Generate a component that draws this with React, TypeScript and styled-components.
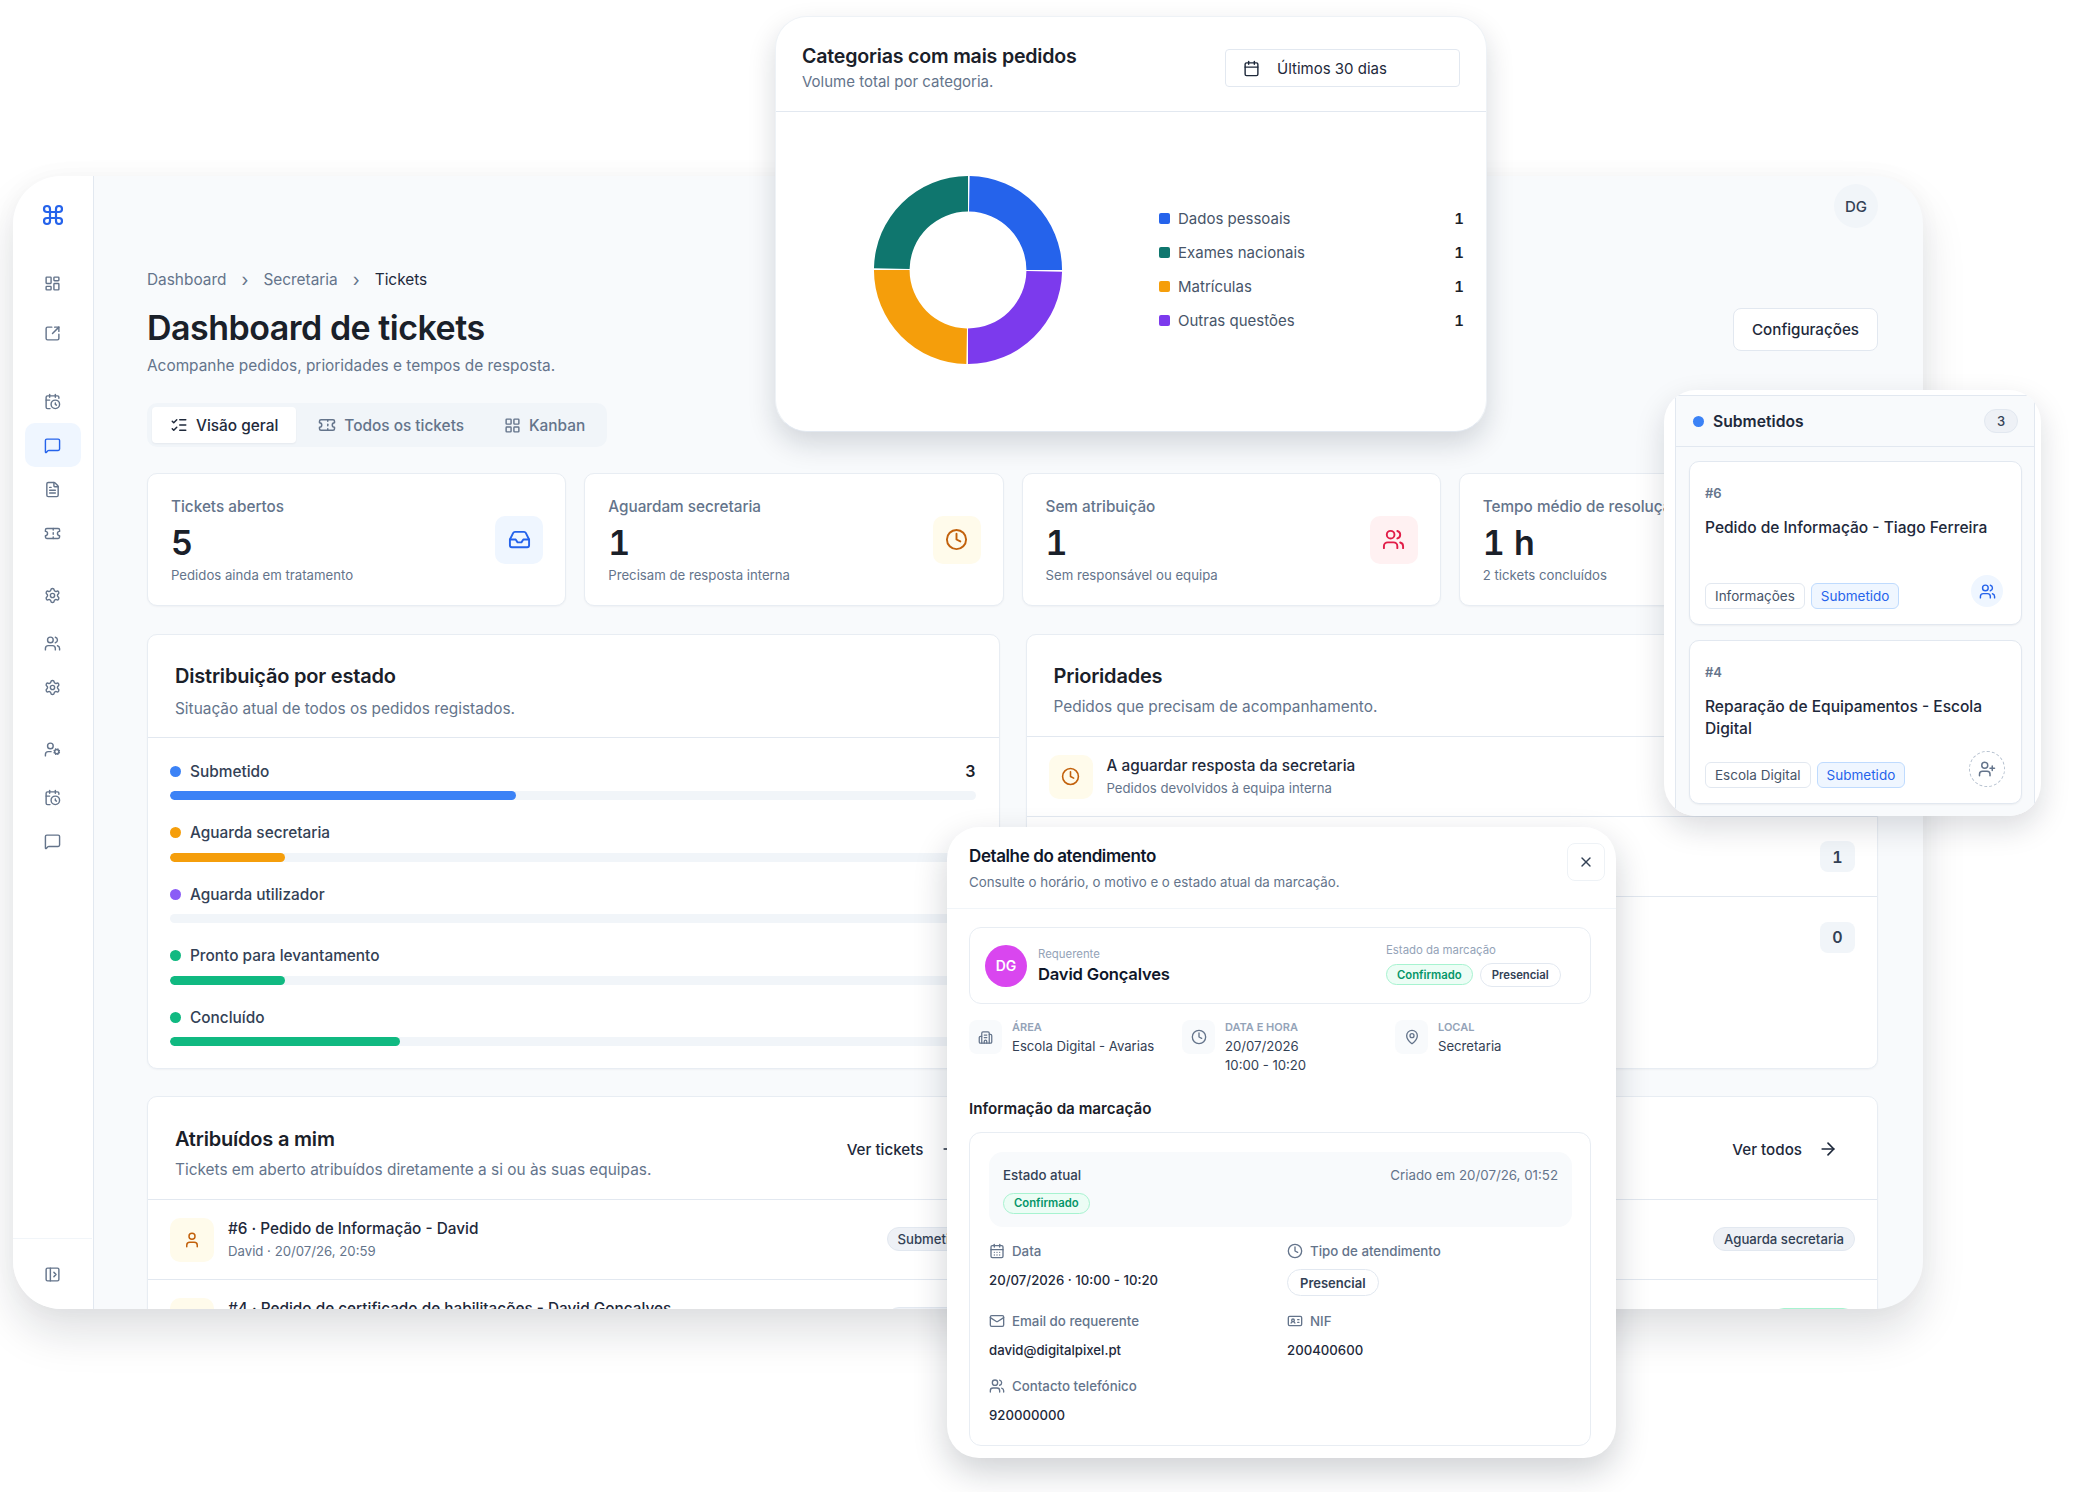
import React from 'react';
import styled, { createGlobalStyle } from 'styled-components';
import {
  ArrowRight, Building2, Calendar, CalendarClock, CalendarDays, Clock, Command, FileText, IdCard,
  Inbox, LayoutGrid, LayoutDashboard, ListChecks, Mail, MapPin, MessageSquare, PanelLeftOpen, Settings,
  SquareArrowOutUpRight, Ticket, Timer, User, UserCog, UserPlus, Users, X,
} from 'lucide-react';

const GlobalStyle = createGlobalStyle`
  html, body { margin: 0; padding: 0; background: #ffffff; }
  * { box-sizing: border-box; }
  body { font-family: 'Inter', 'Liberation Sans', sans-serif; color: #1a2029; }
`;

const stats = [
  { label: 'Submetido', color: '#3b82f6', value: '3', share: 42.9 },
  { label: 'Aguarda secretaria', color: '#f59e0b', value: '', share: 14.3 },
  { label: 'Aguarda utilizador', color: '#8b5cf6', value: '', share: 0 },
  { label: 'Pronto para levantamento', color: '#10b981', value: '', share: 14.3 },
  { label: 'Concluído', color: '#10b981', value: '', share: 28.6 },
];

const kpis = [
  { label: 'Tickets abertos', value: '5', sub: 'Pedidos ainda em tratamento', icon: Inbox, bg: '#eff6ff', fg: '#2563eb' },
  { label: 'Aguardam secretaria', value: '1', sub: 'Precisam de resposta interna', icon: Clock, bg: '#fffbeb', fg: '#c2610c' },
  { label: 'Sem atribuição', value: '1', sub: 'Sem responsável ou equipa', icon: Users, bg: '#fff1f2', fg: '#e11d48' },
  { label: 'Tempo médio de resolução', value: '1 h', sub: '2 tickets concluídos', icon: Timer, bg: '#ecfdf5', fg: '#059669' },
];

const legend = [
  { label: 'Dados pessoais', color: '#2563eb' },
  { label: 'Exames nacionais', color: '#0f766e' },
  { label: 'Matrículas', color: '#f59e0b' },
  { label: 'Outras questões', color: '#7c3aed' },
];

// fatia do donut, angulos em graus a partir do topo
const slice = (from: number, to: number) => {
  const pt = (r: number, a: number) => {
    const rad = ((a - 90) * Math.PI) / 180;
    return `${(100 + r * Math.cos(rad)).toFixed(2)} ${(100 + r * Math.sin(rad)).toFixed(2)}`;
  };
  return `M${pt(95, from)} A95 95 0 0 1 ${pt(95, to)} L${pt(59, to)} A59 59 0 0 0 ${pt(59, from)} Z`;
};

const App: React.FC = () => {
  return (
    <Stage>
      <GlobalStyle />

      <MainWindow>
        <Sidebar>
          <Logo><Command size={24} strokeWidth={2.2} /></Logo>
          <NavGroup $top={7} $gap={6}>
            <NavItem><LayoutDashboard size={17} /></NavItem>
            <NavItem><SquareArrowOutUpRight size={17} /></NavItem>
          </NavGroup>
          <NavGroup $top={24}>
            <NavItem><CalendarClock size={17} /></NavItem>
            <NavItem $active><MessageSquare size={17} /></NavItem>
            <NavItem><FileText size={17} /></NavItem>
            <NavItem><Ticket size={17} /></NavItem>
          </NavGroup>
          <NavGroup $top={18} $gap={4}>
            <NavItem><Settings size={17} /></NavItem>
            <NavItem><Users size={17} /></NavItem>
          </NavGroup>
          <NavGroup>
            <NavItem><Settings size={17} /></NavItem>
          </NavGroup>
          <NavGroup $top={18} $gap={4}>
            <NavItem><UserCog size={17} /></NavItem>
            <NavItem><CalendarClock size={17} /></NavItem>
          </NavGroup>
          <NavGroup>
            <NavItem><MessageSquare size={17} /></NavItem>
          </NavGroup>
          <SideFoot><PanelLeftOpen size={17} /></SideFoot>
        </Sidebar>

        <Main>
          <Topbar><UserBubble>DG</UserBubble></Topbar>

          <Breadcrumb>
            <span>Dashboard</span><Sep>›</Sep><span>Secretaria</span><Sep>›</Sep><b>Tickets</b>
          </Breadcrumb>

          <PageHead>
            <div>
              <PageTitle>Dashboard de tickets</PageTitle>
              <PageSub>Acompanhe pedidos, prioridades e tempos de resposta.</PageSub>
            </div>
            <OutlineButton>Configurações</OutlineButton>
          </PageHead>

          <Tabs>
            <Tab $active><ListChecks size={18} />Visão geral</Tab>
            <Tab><Ticket size={18} />Todos os tickets</Tab>
            <Tab><LayoutGrid size={17} />Kanban</Tab>
          </Tabs>

          <KpiGrid>
            {kpis.map((k) => (
              <KpiCard key={k.label}>
                <KpiText>
                  <KpiLabel>{k.label}</KpiLabel>
                  <KpiValue>{k.value}</KpiValue>
                  <KpiSub>{k.sub}</KpiSub>
                </KpiText>
                <KpiTile $bg={k.bg} $fg={k.fg}><k.icon size={23} /></KpiTile>
              </KpiCard>
            ))}
          </KpiGrid>

          <TwoCols>
            <Panel>
              <PanelHead>
                <PanelTitle>Distribuição por estado</PanelTitle>
                <PanelSub $gap={10}>Situação atual de todos os pedidos registados.</PanelSub>
              </PanelHead>
              <StatList>
                {stats.map((s) => (
                  <div key={s.label}>
                    <StatRow>
                      <Dot $color={s.color} />
                      <StatLabel>{s.label}</StatLabel>
                      <StatValue>{s.value}</StatValue>
                    </StatRow>
                    <Track><Fill $color={s.color} style={{ width: `${s.share}%` }} /></Track>
                  </div>
                ))}
              </StatList>
            </Panel>

            <Panel>
              <PanelHead $bottom={19}>
                <PanelTitle>Prioridades</PanelTitle>
                <PanelSub $gap={8}>Pedidos que precisam de acompanhamento.</PanelSub>
              </PanelHead>
              <ListRow>
                <RowTile><Clock size={19} /></RowTile>
                <RowText>
                  <RowTitle>A aguardar resposta da secretaria</RowTitle>
                  <RowSub>Pedidos devolvidos à equipa interna</RowSub>
                </RowText>
                <CountBadge>1</CountBadge>
              </ListRow>
              <ListRow>
                <RowText />
                <CountBadge>1</CountBadge>
              </ListRow>
              <ListRow $plain>
                <RowText />
                <CountBadge>0</CountBadge>
              </ListRow>
            </Panel>
          </TwoCols>

          <BottomCols>
            <Panel>
              <PanelHeadRow>
                <div>
                  <PanelTitle>Atribuídos a mim</PanelTitle>
                  <PanelSub $gap={8}>Tickets em aberto atribuídos diretamente a si ou às suas equipas.</PanelSub>
                </div>
                <TextLink>Ver tickets<ArrowRight size={20} /></TextLink>
              </PanelHeadRow>
              <ListRow>
                <RowTile><User size={18} /></RowTile>
                <RowText>
                  <RowTitle>#6 · Pedido de Informação - David</RowTitle>
                  <RowSub>David · 20/07/26, 20:59</RowSub>
                </RowText>
                <StatePill>Submetido</StatePill>
              </ListRow>
              <ListRow>
                <RowTile><User size={18} /></RowTile>
                <RowText>
                  <RowTitle>#4 · Pedido de certificado de habilitações - David Gonçalves</RowTitle>
                  <RowSub />
                </RowText>
                <StatePill>Submetido</StatePill>
              </ListRow>
            </Panel>

            <Panel>
              <PanelHeadRow>
                <div />
                <TextLink>Ver todos<ArrowRight size={20} /></TextLink>
              </PanelHeadRow>
              <ListRow>
                <RowText />
                <StatePill>Aguarda secretaria</StatePill>
              </ListRow>
              <ListRow>
                <RowText />
                <GreenStub />
              </ListRow>
            </Panel>
          </BottomCols>
        </Main>
      </MainWindow>

      <ChartCard>
        <ChartHead>
          <div>
            <ChartTitle>Categorias com mais pedidos</ChartTitle>
            <ChartSub>Volume total por categoria.</ChartSub>
          </div>
          <RangeSelect><Calendar size={17} />Últimos 30 dias</RangeSelect>
        </ChartHead>
        <ChartBody>
          <Donut viewBox="0 0 200 200">
            <path d={slice(1, 90)} fill="#2563eb" />
            <path d={slice(91, 180)} fill="#7c3aed" />
            <path d={slice(181, 270)} fill="#f59e0b" />
            <path d={slice(271, 360)} fill="#0f766e" />
          </Donut>
          <Legend>
            {legend.map((l) => (
              <LegendRow key={l.label}>
                <Swatch $color={l.color} />
                <LegendLabel>{l.label}</LegendLabel>
                <LegendValue>1</LegendValue>
              </LegendRow>
            ))}
          </Legend>
        </ChartBody>
      </ChartCard>

      <KanbanShell>
        <KanbanColumn>
          <KanbanHead>
            <Dot $color="#3b82f6" />
            <KanbanTitle>Submetidos</KanbanTitle>
            <KanbanCount>3</KanbanCount>
          </KanbanHead>
          <KanbanCards>
            <TicketCard>
              <TicketId>#6</TicketId>
              <TicketTitle>Pedido de Informação - Tiago Ferreira</TicketTitle>
              <TicketFoot>
                <Tag>Informações</Tag>
                <Tag $blue>Submetido</Tag>
                <Assignee><Users size={17} /></Assignee>
              </TicketFoot>
            </TicketCard>
            <TicketCard>
              <TicketId>#4</TicketId>
              <TicketTitle>Reparação de Equipamentos - Escola Digital</TicketTitle>
              <TicketFoot>
                <Tag>Escola Digital</Tag>
                <Tag $blue>Submetido</Tag>
                <Assignee $empty><UserPlus size={18} /></Assignee>
              </TicketFoot>
            </TicketCard>
          </KanbanCards>
        </KanbanColumn>
      </KanbanShell>

      <DetailModal>
        <ModalHead>
          <div>
            <ModalTitle>Detalhe do atendimento</ModalTitle>
            <ModalSub>Consulte o horário, o motivo e o estado atual da marcação.</ModalSub>
          </div>
          <CloseButton><X size={16} /></CloseButton>
        </ModalHead>
        <ModalBody>
          <RequesterBox>
            <Avatar>DG</Avatar>
            <div>
              <TinyLabel>Requerente</TinyLabel>
              <RequesterName>David Gonçalves</RequesterName>
            </div>
            <RequesterState>
              <TinyLabel>Estado da marcação</TinyLabel>
              <PillRow>
                <Pill $tone="green">Confirmado</Pill>
                <Pill>Presencial</Pill>
              </PillRow>
            </RequesterState>
          </RequesterBox>

          <InfoRow>
            <InfoCell>
              <InfoTile><Building2 size={15} /></InfoTile>
              <div>
                <InfoLabel>Área</InfoLabel>
                <InfoValue>Escola Digital - Avarias</InfoValue>
              </div>
            </InfoCell>
            <InfoCell>
              <InfoTile><Clock size={16} /></InfoTile>
              <div>
                <InfoLabel>Data e hora</InfoLabel>
                <InfoValue>20/07/2026<br />10:00 - 10:20</InfoValue>
              </div>
            </InfoCell>
            <InfoCell>
              <InfoTile><MapPin size={16} /></InfoTile>
              <div>
                <InfoLabel>Local</InfoLabel>
                <InfoValue>Secretaria</InfoValue>
              </div>
            </InfoCell>
          </InfoRow>

          <SectionTitle>Informação da marcação</SectionTitle>

          <DetailBox>
            <StatusBox>
              <StatusLine>
                <StatusName>Estado atual</StatusName>
                <StatusDate>Criado em 20/07/26, 01:52</StatusDate>
              </StatusLine>
              <Pill $tone="green">Confirmado</Pill>
            </StatusBox>
            <FieldGrid>
              <Field>
                <FieldLabel><CalendarDays size={16} />Data</FieldLabel>
                <FieldValue>20/07/2026 · 10:00 - 10:20</FieldValue>
              </Field>
              <Field>
                <FieldLabel><Clock size={16} />Tipo de atendimento</FieldLabel>
                <WidePill>Presencial</WidePill>
              </Field>
              <Field>
                <FieldLabel><Mail size={16} />Email do requerente</FieldLabel>
                <FieldValue>david@digitalpixel.pt</FieldValue>
              </Field>
              <Field>
                <FieldLabel><IdCard size={16} />NIF</FieldLabel>
                <FieldValue>200400600</FieldValue>
              </Field>
              <Field>
                <FieldLabel><Users size={16} />Contacto telefónico</FieldLabel>
                <FieldValue>920000000</FieldValue>
              </Field>
            </FieldGrid>
          </DetailBox>
        </ModalBody>
      </DetailModal>
    </Stage>
  );
};
export default App;

const Stage = styled.div`
  position: relative;
  width: 2074px;
  height: 1492px;
  overflow: hidden;
  background: #ffffff;
`;

/* as quatro janelas flutuam livres sobre o palco */
const MainWindow = styled.div`
  position: absolute;
  left: 13px;
  top: 176px;
  width: 1910px;
  height: 1133px;
  display: flex;
  overflow: hidden;
  background: #f8fafc;
  border-radius: 48px;
  box-shadow: 0 24px 44px rgba(15, 23, 42, 0.13), 0 0 24px rgba(15, 23, 42, 0.03);
`;
const Sidebar = styled.aside`
  width: 81px;
  flex-shrink: 0;
  padding-right: 1px;
  display: flex;
  flex-direction: column;
  align-items: center;
  background: #ffffff;
  border-right: 1px solid #e2e8f0;
`;
const Logo = styled.div`
  height: 78px;
  display: flex;
  align-items: center;
  color: #2563eb;
`;
const NavGroup = styled.div<{ $top?: number; $gap?: number }>`
  margin-top: ${(p) => p.$top ?? 0}px;
  display: flex;
  flex-direction: column;
  gap: ${(p) => p.$gap ?? 0}px;
`;
const NavItem = styled.div<{ $active?: boolean }>`
  width: 56px;
  height: 44px;
  display: flex;
  align-items: center;
  justify-content: center;
  border-radius: 10px;
  color: ${(p) => (p.$active ? '#2563eb' : '#64748b')};
  background: ${(p) => (p.$active ? '#eff6ff' : 'transparent')};
`;
const SideFoot = styled.div`
  width: 100%;
  margin-top: auto;
  height: 71px;
  display: flex;
  align-items: center;
  justify-content: center;
  color: #64748b;
  border-top: 1px solid #f1f5f9;
`;
const Main = styled.main`
  flex: 1;
  min-width: 0;
  padding: 8px 45px 0 53px;
`;
const Topbar = styled.div`
  display: flex;
  justify-content: flex-end;
`;
const UserBubble = styled.div`
  width: 44px;
  height: 44px;
  display: flex;
  align-items: center;
  justify-content: center;
  border-radius: 50%;
  background: #f1f5f9;
  color: #334155;
  font-size: 15px;
  font-weight: 500;
`;
const Breadcrumb = styled.nav`
  margin-top: 41px;
  height: 20px;
  display: flex;
  align-items: center;
  font-size: 15.4px;
  color: #64748b;

  b {
    font-weight: 400;
    color: #1e293b;
  }
`;
const Sep = styled.span`
  width: 37px;
  text-align: center;
  font-size: 18px;
`;
const PageHead = styled.div`
  margin-top: 17px;
  display: flex;
  justify-content: space-between;
  align-items: flex-start;
`;
const PageTitle = styled.h1`
  margin: 0;
  font-size: 34px;
  line-height: 44px;
  font-weight: 600;
  letter-spacing: -0.5px;
  color: #1a2029;
`;
const PageSub = styled.p`
  margin: 5px 0 0;
  font-size: 15.4px;
  line-height: 22px;
  color: #64748b;
`;
const OutlineButton = styled.button`
  margin-top: 2px;
  width: 145px;
  height: 43px;
  border: 1px solid #e2e8f0;
  border-radius: 8px;
  background: #ffffff;
  font-family: inherit;
  font-size: 15.2px;
  font-weight: 500;
  color: #1e293b;
`;
const Tabs = styled.div`
  margin-top: 26px;
  width: 460px;
  height: 44px;
  padding: 4px 5px;
  display: flex;
  align-items: stretch;
  gap: 4px;
  border-radius: 10px;
  background: #f1f5f9;
`;
const Tab = styled.div<{ $active?: boolean }>`
  flex: none;
  display: flex;
  align-items: center;
  gap: 8px;
  padding: 0 18px;
  font-size: 15.4px;
  font-weight: 500;
  white-space: nowrap;
  border-radius: 4px;
  color: ${(p) => (p.$active ? '#1e293b' : '#64748b')};
  background: ${(p) => (p.$active ? '#ffffff' : 'transparent')};
  box-shadow: ${(p) => (p.$active ? '0 1px 2px rgba(15, 23, 42, 0.05)' : 'none')};
`;
const KpiGrid = styled.div`
  margin-top: 26px;
  display: grid;
  grid-template-columns: repeat(4, 1fr);
  gap: 18px;
`;
const KpiCard = styled.div`
  height: 133px;
  padding: 0 22px 0 23px;
  display: flex;
  align-items: center;
  justify-content: space-between;
  background: #ffffff;
  border: 1px solid #e8edf3;
  border-radius: 10px;
  box-shadow: 0 1px 2px rgba(15, 23, 42, 0.04);
`;
const KpiText = styled.div`
  padding-top: 1px;
`;
const KpiLabel = styled.div`
  font-size: 15.3px;
  line-height: 20px;
  font-weight: 500;
  white-space: nowrap;
  color: #64748b;
`;
const KpiValue = styled.div`
  margin-top: 7px;
  font-size: 34px;
  line-height: 38px;
  font-weight: 600;
  font-variant-numeric: tabular-nums;
  color: #1a2029;
`;
const KpiSub = styled.div`
  margin-top: 4px;
  font-size: 13.2px;
  line-height: 18px;
  color: #64748b;
`;
const KpiTile = styled.div<{ $bg: string; $fg: string }>`
  width: 48px;
  height: 48px;
  display: flex;
  align-items: center;
  justify-content: center;
  flex-shrink: 0;
  border-radius: 10px;
  background: ${(p) => p.$bg};
  color: ${(p) => p.$fg};
`;
const TwoCols = styled.div`
  margin-top: 28px;
  display: grid;
  grid-template-columns: 1fr 1fr;
  gap: 26px;
`;
const BottomCols = styled(TwoCols)`
  margin-top: 27px;
`;
const Panel = styled.section`
  background: #ffffff;
  border: 1px solid #e8edf3;
  border-radius: 10px;
  box-shadow: 0 1px 2px rgba(15, 23, 42, 0.04);
  min-width: 0;
`;
const PanelHead = styled.header<{ $bottom?: number }>`
  padding: 28px 27px ${(p) => p.$bottom ?? 18}px;
  border-bottom: 1px solid #e2e8f0;
`;
const PanelHeadRow = styled.header`
  height: 103px;
  padding: 29px 0 0 27px;
  display: flex;
  justify-content: space-between;
  align-items: flex-start;
  border-bottom: 1px solid #e2e8f0;
`;
const PanelTitle = styled.h2`
  margin: 0;
  font-size: 20px;
  line-height: 26px;
  font-weight: 600;
  letter-spacing: -0.2px;
  color: #1a2029;
`;
const PanelSub = styled.p<{ $gap: number }>`
  margin: ${(p) => p.$gap}px 0 0;
  font-size: 15.4px;
  line-height: 20px;
  color: #64748b;
`;
const StatList = styled.div`
  padding: 23px 23px 22px 22px;
  display: flex;
  flex-direction: column;
  gap: 22.5px;
`;
const StatRow = styled.div`
  height: 20px;
  display: flex;
  align-items: center;
  gap: 9px;
`;
const Dot = styled.span<{ $color: string }>`
  width: 11px;
  height: 11px;
  flex-shrink: 0;
  border-radius: 50%;
  background: ${(p) => p.$color};
`;
const StatLabel = styled.span`
  flex: 1;
  font-size: 15.4px;
  font-weight: 500;
  color: #334155;
`;
const StatValue = styled.span`
  font-size: 16px;
  font-weight: 600;
  color: #1a2029;
`;
const Track = styled.div`
  margin-top: 10px;
  height: 9px;
  border-radius: 5px;
  background: #f1f5f9;
  overflow: hidden;
`;
const Fill = styled.div<{ $color: string }>`
  height: 100%;
  border-radius: 5px;
  background: ${(p) => p.$color};
`;
const ListRow = styled.div<{ $plain?: boolean }>`
  height: 80px;
  padding: 0 22px;
  display: flex;
  align-items: center;
  gap: 14px;
  border-bottom: ${(p) => (p.$plain ? 'none' : '1px solid #e2e8f0')};
`;
const RowTile = styled.div`
  width: 44px;
  height: 44px;
  flex-shrink: 0;
  display: flex;
  align-items: center;
  justify-content: center;
  border-radius: 10px;
  background: #fffbeb;
  color: #c2610c;
`;
const RowText = styled.div`
  flex: 1;
  min-width: 0;
`;
const RowTitle = styled.div`
  font-size: 15.35px;
  line-height: 20px;
  font-weight: 500;
  white-space: nowrap;
  color: #1e293b;
`;
const RowSub = styled.div`
  margin-top: 3px;
  min-height: 18px;
  font-size: 13.2px;
  line-height: 18px;
  white-space: nowrap;
  color: #64748b;
`;
const CountBadge = styled.div`
  width: 35px;
  height: 31px;
  display: flex;
  align-items: center;
  justify-content: center;
  border-radius: 8px;
  background: #f1f5f9;
  font-size: 16px;
  font-weight: 600;
  font-variant-numeric: tabular-nums;
  color: #334155;
`;
const StatePill = styled.div`
  flex-shrink: 0;
  margin-top: -1px;
  height: 24px;
  padding: 0 10px;
  display: flex;
  align-items: center;
  border: 1px solid #e2e8f0;
  border-radius: 12px;
  background: #eef1f6;
  font-size: 13.2px;
  font-weight: 500;
  white-space: nowrap;
  color: #334155;
`;
const GreenStub = styled.div`
  width: 83px;
  height: 24px;
  border: 1px solid #a7f3d0;
  border-radius: 12px;
  background: #ecfdf5;
`;
const TextLink = styled.div`
  margin: 13px 39px 0 0;
  display: flex;
  align-items: center;
  gap: 16px;
  font-size: 15.2px;
  font-weight: 500;
  color: #1e293b;
`;

const ChartCard = styled.div`
  position: absolute;
  left: 775px;
  top: 16px;
  width: 712px;
  height: 416px;
  background: #ffffff;
  border: 1px solid #eef2f6;
  border-bottom-color: #e2e8f0;
  border-radius: 32px;
  box-shadow: 0 12px 28px rgba(15, 23, 42, 0.16);
  overflow: hidden;
`;
const ChartHead = styled.header`
  height: 95px;
  padding: 29px 26px 0 26px;
  display: flex;
  justify-content: space-between;
  align-items: flex-start;
  border-bottom: 1px solid #e2e8f0;
`;
const ChartTitle = styled.h3`
  margin: 0;
  font-size: 19.6px;
  line-height: 20px;
  font-weight: 600;
  letter-spacing: -0.2px;
  color: #1a2029;
`;
const ChartSub = styled.p`
  margin: 7px 0 0;
  font-size: 15px;
  line-height: 18px;
  color: #64748b;
`;
const RangeSelect = styled.div`
  width: 235px;
  height: 38px;
  padding-left: 17px;
  display: flex;
  align-items: center;
  gap: 17px;
  border: 1px solid #e2e8f0;
  border-radius: 4px;
  font-size: 15px;
  color: #1e293b;
  margin-top: 3px;
`;
const ChartBody = styled.div`
  padding: 59px 22px 0 93px;
  display: flex;
  align-items: flex-start;
  gap: 92px;
`;
const Donut = styled.svg`
  width: 198px;
  height: 198px;
  flex-shrink: 0;
`;
const Legend = styled.div`
  flex: 1;
  margin-top: 37px;
  display: flex;
  flex-direction: column;
  gap: 14px;
`;
const LegendRow = styled.div`
  height: 20px;
  display: flex;
  align-items: center;
  gap: 8px;
`;
const Swatch = styled.span<{ $color: string }>`
  width: 11px;
  height: 11px;
  border-radius: 2px;
  background: ${(p) => p.$color};
`;
const LegendLabel = styled.span`
  flex: 1;
  font-size: 15px;
  color: #475569;
`;
const LegendValue = styled.span`
  font-size: 15px;
  font-weight: 600;
  font-variant-numeric: tabular-nums;
  color: #1a2029;
`;

const KanbanShell = styled.div`
  position: absolute;
  left: 1664px;
  top: 390px;
  width: 377px;
  height: 426px;
  padding: 5px 6px 0 11px;
  background: #ffffff;
  border-radius: 32px;
  box-shadow: 0 12px 30px rgba(15, 23, 42, 0.15);
  overflow: hidden;
`;
const KanbanColumn = styled.div`
  height: 100%;
  background: #f8fafc;
  border: solid #e2e8f0;
  border-width: 1px 1px 0 1px;
`;
const KanbanHead = styled.div`
  height: 51px;
  padding: 0 16px 0 17px;
  display: flex;
  align-items: center;
  gap: 9px;
  border-bottom: 1px solid #e2e8f0;
`;
const KanbanTitle = styled.span`
  flex: 1;
  font-size: 15.7px;
  font-weight: 600;
  color: #1e293b;
`;
const KanbanCount = styled.span`
  width: 34px;
  height: 24px;
  display: flex;
  align-items: center;
  justify-content: center;
  border-radius: 12px;
  background: #eef1f6;
  border: 1px solid #e2e8f0;
  font-size: 13px;
  font-weight: 500;
  color: #334155;
`;
const KanbanCards = styled.div`
  padding: 14px 12px 0 13px;
  display: flex;
  flex-direction: column;
  gap: 15px;
`;
const TicketCard = styled.article`
  position: relative;
  height: 164px;
  padding: 21px 15px 0;
  display: flex;
  flex-direction: column;
  background: #ffffff;
  border: 1px solid #e2e8f0;
  border-radius: 10px;
  box-shadow: 0 1px 2px rgba(15, 23, 42, 0.05);
`;
const TicketId = styled.div`
  font-size: 13px;
  line-height: 20px;
  font-weight: 600;
  color: #64748b;
`;
const TicketTitle = styled.div`
  margin-top: 14px;
  font-size: 15.55px;
  line-height: 22px;
  font-weight: 500;
  color: #1e293b;
`;
const TicketFoot = styled.div`
  margin-top: auto;
  margin-bottom: 15px;
  display: flex;
  align-items: center;
  gap: 6px;
`;
const Tag = styled.span<{ $blue?: boolean }>`
  height: 26px;
  padding: 0 9px;
  display: flex;
  align-items: center;
  border: 1px solid ${(p) => (p.$blue ? '#bfdbfe' : '#e2e8f0')};
  border-radius: 6px;
  background: ${(p) => (p.$blue ? '#eff6ff' : '#ffffff')};
  font-size: 13.5px;
  color: ${(p) => (p.$blue ? '#2563eb' : '#475569')};
`;
const Assignee = styled.span<{ $empty?: boolean }>`
  position: absolute;
  right: ${(p) => (p.$empty ? 16 : 18)}px;
  bottom: ${(p) => (p.$empty ? 16 : 17)}px;
  width: ${(p) => (p.$empty ? 36 : 32)}px;
  height: ${(p) => (p.$empty ? 36 : 32)}px;
  display: flex;
  align-items: center;
  justify-content: center;
  border-radius: 50%;
  border: ${(p) => (p.$empty ? '1.5px dashed #b6c1cf' : 'none')};
  background: ${(p) => (p.$empty ? 'transparent' : '#eff6ff')};
  color: ${(p) => (p.$empty ? '#64748b' : '#2563eb')};
`;

const DetailModal = styled.div`
  position: absolute;
  left: 947px;
  top: 827px;
  width: 669px;
  height: 631px;
  background: #ffffff;
  border-radius: 32px;
  box-shadow: 0 14px 34px rgba(15, 23, 42, 0.2);
  overflow: hidden;
`;
const ModalHead = styled.header`
  height: 82px;
  padding: 19px 11px 0 22px;
  display: flex;
  justify-content: space-between;
  align-items: flex-start;
  border-bottom: 1px solid #f1f5f9;
`;
const ModalTitle = styled.h3`
  margin: 0;
  font-size: 17px;
  line-height: 20px;
  font-weight: 600;
  letter-spacing: -0.4px;
  color: #0f172a;
`;
const ModalSub = styled.p`
  margin: 7px 0 0;
  font-size: 13.3px;
  line-height: 18px;
  color: #64748b;
`;
const CloseButton = styled.div`
  width: 38px;
  height: 38px;
  margin-top: -3px;
  display: flex;
  align-items: center;
  justify-content: center;
  border: 1px solid #eef2f6;
  border-radius: 8px;
  color: #334155;
`;
const ModalBody = styled.div`
  padding: 18px 25px 0 22px;
`;
const RequesterBox = styled.div`
  height: 77px;
  padding: 0 16px 0 15px;
  display: flex;
  align-items: center;
  gap: 11px;
  border: 1px solid #e8edf3;
  border-radius: 12px;
`;
const Avatar = styled.div`
  width: 42px;
  height: 42px;
  flex-shrink: 0;
  display: flex;
  align-items: center;
  justify-content: center;
  border-radius: 50%;
  background: #d946ef;
  color: #ffffff;
  font-size: 14px;
  font-weight: 600;
`;
const TinyLabel = styled.div`
  font-size: 11.4px;
  line-height: 14px;
  color: #94a3b8;
`;
const RequesterName = styled.div`
  margin-top: 2px;
  font-size: 16.6px;
  line-height: 22px;
  font-weight: 600;
  letter-spacing: -0.2px;
  color: #0f172a;
`;
const RequesterState = styled.div`
  margin-left: auto;
  width: 188px;
  margin-top: -2px;
`;
const PillRow = styled.div`
  margin-top: 6px;
  display: flex;
  align-items: center;
  gap: 7px;
`;
const Pill = styled.span<{ $tone?: 'green' }>`
  display: inline-flex;
  align-items: center;
  height: ${(p) => (p.$tone ? 21 : 24)}px;
  padding: 0 ${(p) => (p.$tone ? 10 : 11)}px;
  border: 1px solid ${(p) => (p.$tone ? '#a7f3d0' : '#e2e8f0')};
  border-radius: 12px;
  background: ${(p) => (p.$tone ? '#ecfdf5' : '#ffffff')};
  font-size: 11.3px;
  font-weight: 600;
  color: ${(p) => (p.$tone ? '#059669' : '#334155')};
`;
const InfoRow = styled.div`
  margin-top: 16px;
  display: grid;
  grid-template-columns: repeat(3, 213px);
  height: 66px;
`;
const InfoCell = styled.div`
  display: flex;
  align-items: flex-start;
  gap: 10px;
`;
const InfoTile = styled.div`
  width: 33px;
  height: 34px;
  flex-shrink: 0;
  display: flex;
  align-items: center;
  justify-content: center;
  border-radius: 8px;
  background: #f8fafc;
  color: #64748b;
`;
const InfoLabel = styled.div`
  font-size: 11px;
  line-height: 14px;
  font-weight: 600;
  text-transform: uppercase;
  color: #94a3b8;
`;
const InfoValue = styled.div`
  margin-top: 3px;
  font-size: 13.15px;
  line-height: 19px;
  color: #334155;
`;
const SectionTitle = styled.h4`
  margin: 13px 0 0;
  font-size: 15.2px;
  line-height: 20px;
  font-weight: 600;
  color: #1a2029;
`;
const DetailBox = styled.div`
  margin-top: 13px;
  height: 314px;
  padding: 19px 18px 0 19px;
  border: 1px solid #e8edf3;
  border-radius: 12px;
`;
const StatusBox = styled.div`
  height: 75px;
  padding: 13px 14px 0;
  border-radius: 14px;
  background: #f8fafc;
`;
const StatusLine = styled.div`
  margin-bottom: 6px;
  height: 20px;
  display: flex;
  align-items: center;
  justify-content: space-between;
`;
const StatusName = styled.span`
  font-size: 13.3px;
  font-weight: 500;
  color: #334155;
`;
const StatusDate = styled.span`
  font-size: 13.3px;
  color: #64748b;
`;
const FieldGrid = styled.div`
  margin-top: 14px;
  display: grid;
  grid-template-columns: 298px 1fr;
`;
const Field = styled.div`
  min-height: 65px;
  display: flex;
  flex-direction: column;
  align-items: flex-start;
`;
const FieldLabel = styled.div`
  height: 20px;
  display: flex;
  align-items: center;
  gap: 7px;
  font-size: 13.3px;
  font-weight: 500;
  color: #64748b;
`;
const FieldValue = styled.div`
  margin-top: 9px;
  font-size: 13.2px;
  line-height: 20px;
  font-weight: 500;
  color: #1e293b;
`;
const WidePill = styled.span`
  margin: 8px 0 15px;
  display: inline-flex;
  align-items: center;
  height: 27px;
  padding: 0 12px;
  border: 1px solid #e2e8f0;
  border-radius: 14px;
  font-size: 13px;
  font-weight: 600;
  color: #334155;
`;
